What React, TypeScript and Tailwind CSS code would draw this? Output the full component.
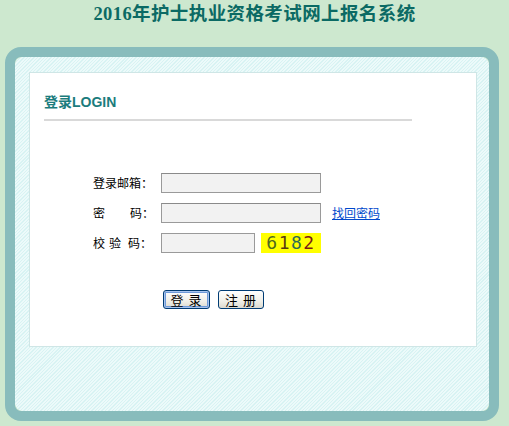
import React from "react";

const cjk = "font-['Liberation_Serif','Noto_Sans_CJK_SC',serif]";
const sans = "font-['Noto_Sans_CJK_SC','Liberation_Sans',sans-serif]";

function Row({ label, children }: { label: React.ReactNode; children: React.ReactNode }) {
  return (
    <div className="flex items-center h-[20px]">
      <div className={`relative w-[68px] h-[20px] text-[12px] leading-[20px] text-black whitespace-pre ${sans}`}>{label}</div>
      {children}
    </div>
  );
}

function Input({ w }: { w: string }) {
  return <div className={`${w} h-[20px] bg-[#f2f2f2] border border-[#9a9a9a] border-t-[#8a8a8a]`} />;
}

export default function App() {
  return (
    <div className="w-[509px] h-[426px] bg-[#cde8cf] overflow-hidden">
      <div className="h-[47px] pt-[3px] flex justify-center">
        <h1 className={`text-[18.5px] leading-[22px] font-bold text-[#0b6a64] tracking-[0.4px] ${cjk}`}>
          2016年护士执业资格考试网上报名系统
        </h1>
      </div>
      <div className="ml-[5px] w-[494px] h-[374px] rounded-[16px] border-[10px] border-[#88bcbc] overflow-hidden">
        <div className="w-full h-full rounded-[8px] bg-[repeating-linear-gradient(135deg,#ecfafa_0px,#ecfafa_1.4px,#d8f3f3_1.4px,#d8f3f3_2.4px)] pt-[15px] pl-[14px]">
          <div className="w-[448px] h-[275px] bg-white border border-[#cfe6e6] pt-[21px] pl-[14px]">
            <div className={`text-[14px] leading-[16px] font-bold text-[#1b7c7d] font-['Liberation_Sans','Noto_Sans_CJK_SC',sans-serif]`}>
              登录LOGIN
            </div>
            <div className="mt-[9px] w-[368px] h-[2px] bg-[#d9d9d9]" />
            <div className="mt-[52px] pl-[49px] flex flex-col gap-[10px]">
              <Row label="登录邮箱：">
                <Input w="w-[160px]" />
              </Row>
              <Row
                label={
                  <>
                    <span>密</span>
                    <span className="ml-[25px]">码：</span>
                  </>
                }
              >
                <Input w="w-[160px]" />
                <a
                  href="#"
                  className={`ml-[11px] text-[12px] leading-[20px] text-[#0048cc] underline ${sans}`}
                >
                  找回密码
                </a>
              </Row>
              <Row
                label={
                  <>
                    <span>校</span>
                    <span className="ml-[4px]">验</span>
                    <span className="ml-[7px]">码：</span>
                  </>
                }
              >
                <div className="w-[94px] h-[20px] bg-[#f2f2f2] border border-[#9a9a9a]" />
                <div className="ml-[6px] w-[60px] h-[20px] bg-[#ffff00] flex items-center justify-center font-['DejaVu_Sans_Mono',monospace] font-medium text-[18px] leading-[20px] tracking-[1.5px]">
                  <span className="text-[#4f6b1e]">6</span>
                  <span className="text-[#5a3a12]">1</span>
                  <span className="text-[#2d6b55]">8</span>
                  <span className="text-[#7a1c18]">2</span>
                </div>
              </Row>
            </div>
            <div className="mt-[37px] pl-[119px] flex gap-[8px]">
              <button
                className={`w-[47px] h-[19px] rounded-[3px] border border-[#003c74] bg-[linear-gradient(#ffffff,#f0efe8_60%,#dcdad0)] shadow-[inset_0_0_0_1px_#a8c4ee,inset_0_0_0_2px_#6f9ad8] text-[13px] leading-[16px] text-black tracking-[1px] ${sans}`}
              >
                登 录
              </button>
              <button
                className={`w-[46px] h-[19px] rounded-[3px] border border-[#003c74] bg-[linear-gradient(#ffffff,#f0efe8_60%,#dcdad0)] text-[13px] leading-[16px] text-black tracking-[1px] ${sans}`}
              >
                注 册
              </button>
            </div>
          </div>
        </div>
      </div>
    </div>
  );
}
